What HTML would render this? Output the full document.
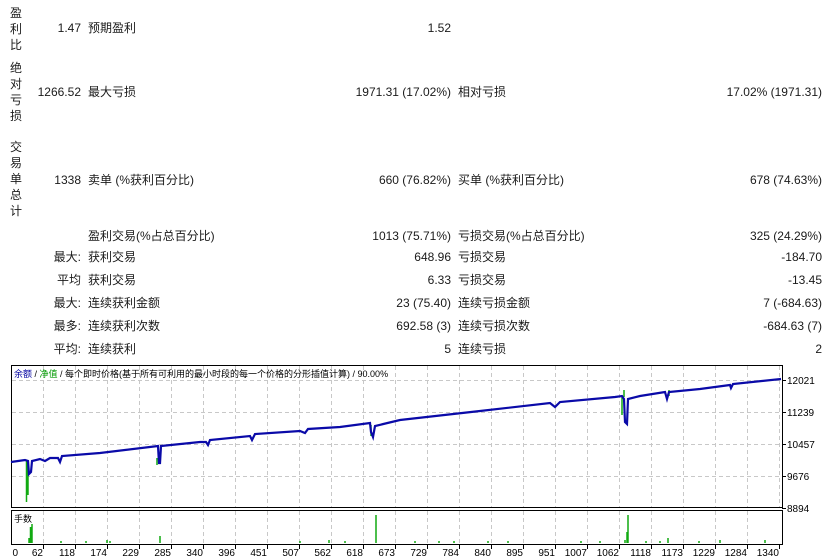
<!DOCTYPE html>
<html><head><meta charset="utf-8"><style>
body{margin:0;width:830px;height:560px;background:#fff;position:relative;overflow:hidden;font-family:"Liberation Sans","Noto Sans CJK SC",sans-serif;font-size:12px;color:#1a1a1a}
.t{position:absolute;white-space:nowrap;line-height:14px}
.r{text-align:right}
.v{position:absolute;left:10px;width:14px;line-height:16px;font-size:12px}
</style></head><body>
<div class="v" style="top:5px">盈<br>利<br>比</div>
<div class="v" style="top:60px">绝<br>对<br>亏<br>损</div>
<div class="v" style="top:139px">交<br>易<br>单<br>总<br>计</div>

<div class="t r" style="right:749px;top:21px">1.47</div>
<div class="t" style="left:88px;top:21px">预期盈利</div>
<div class="t r" style="right:379px;top:21px">1.52</div>

<div class="t r" style="right:749px;top:85px">1266.52</div>
<div class="t" style="left:88px;top:85px">最大亏损</div>
<div class="t r" style="right:379px;top:85px">1971.31 (17.02%)</div>
<div class="t" style="left:458px;top:85px">相对亏损</div>
<div class="t r" style="right:8px;top:85px">17.02% (1971.31)</div>

<div class="t r" style="right:749px;top:173px">1338</div>
<div class="t" style="left:88px;top:173px">卖单 (%获利百分比)</div>
<div class="t r" style="right:379px;top:173px">660 (76.82%)</div>
<div class="t" style="left:458px;top:173px">买单 (%获利百分比)</div>
<div class="t r" style="right:8px;top:173px">678 (74.63%)</div>

<div class="t" style="left:88px;top:229px">盈利交易(%占总百分比)</div>
<div class="t r" style="right:379px;top:229px">1013 (75.71%)</div>
<div class="t" style="left:458px;top:229px">亏损交易(%占总百分比)</div>
<div class="t r" style="right:8px;top:229px">325 (24.29%)</div>

<div class="t r" style="right:749px;top:250px">最大:</div>
<div class="t" style="left:88px;top:250px">获利交易</div>
<div class="t r" style="right:379px;top:250px">648.96</div>
<div class="t" style="left:458px;top:250px">亏损交易</div>
<div class="t r" style="right:8px;top:250px">-184.70</div>

<div class="t r" style="right:749px;top:273px">平均</div>
<div class="t" style="left:88px;top:273px">获利交易</div>
<div class="t r" style="right:379px;top:273px">6.33</div>
<div class="t" style="left:458px;top:273px">亏损交易</div>
<div class="t r" style="right:8px;top:273px">-13.45</div>

<div class="t r" style="right:749px;top:296px">最大:</div>
<div class="t" style="left:88px;top:296px">连续获利金额</div>
<div class="t r" style="right:379px;top:296px">23 (75.40)</div>
<div class="t" style="left:458px;top:296px">连续亏损金额</div>
<div class="t r" style="right:8px;top:296px">7 (-684.63)</div>

<div class="t r" style="right:749px;top:319px">最多:</div>
<div class="t" style="left:88px;top:319px">连续获利次数</div>
<div class="t r" style="right:379px;top:319px">692.58 (3)</div>
<div class="t" style="left:458px;top:319px">连续亏损次数</div>
<div class="t r" style="right:8px;top:319px">-684.63 (7)</div>

<div class="t r" style="right:749px;top:342px">平均:</div>
<div class="t" style="left:88px;top:342px">连续获利</div>
<div class="t r" style="right:379px;top:342px">5</div>
<div class="t" style="left:458px;top:342px">连续亏损</div>
<div class="t r" style="right:8px;top:342px">2</div>

<svg width="830" height="560" style="position:absolute;left:0;top:0" xmlns="http://www.w3.org/2000/svg">
<g stroke="#c8c8c8" stroke-dasharray="4,3" stroke-width="1">
<path d="M43.5 366V507M75.5 366V507M107.5 366V507M139.5 366V507M171.5 366V507M203.5 366V507M235.5 366V507M267.5 366V507M299.5 366V507M331.5 366V507M363.5 366V507M395.5 366V507M427.5 366V507M459.5 366V507M491.5 366V507M523.5 366V507M555.5 366V507M587.5 366V507M619.5 366V507M651.5 366V507M683.5 366V507M715.5 366V507M747.5 366V507M779.5 366V507"/>
<path d="M12 380.5H781M12 412.5H781M12 444.5H781M12 476.5H781"/>
<path d="M43.5 511V543M75.5 511V543M107.5 511V543M139.5 511V543M171.5 511V543M203.5 511V543M235.5 511V543M267.5 511V543M299.5 511V543M331.5 511V543M363.5 511V543M395.5 511V543M427.5 511V543M459.5 511V543M491.5 511V543M523.5 511V543M555.5 511V543M587.5 511V543M619.5 511V543M651.5 511V543M683.5 511V543M715.5 511V543M747.5 511V543"/>
</g>
<rect x="11.5" y="365.5" width="771" height="142" fill="none" stroke="#000"/>
<rect x="11.5" y="510.5" width="771" height="34" fill="none" stroke="#000"/>
<g stroke="#000"><path d="M782 380.5h4M782 412.5h4M782 444.5h4M782 476.5h4M782 508.5h4"/>
<path d="M43.5 545v4M75.5 545v4M107.5 545v4M139.5 545v4M171.5 545v4M203.5 545v4M235.5 545v4M267.5 545v4M299.5 545v4M331.5 545v4M363.5 545v4M395.5 545v4M427.5 545v4M459.5 545v4M491.5 545v4M523.5 545v4M555.5 545v4M587.5 545v4M619.5 545v4M651.5 545v4M683.5 545v4M715.5 545v4M747.5 545v4M779.5 545v4"/></g>
<g stroke="#11aa11" stroke-width="1.5" fill="none">
<path d="M26.5 461V502M28 461V495M157 458V465M371 425V436M622 396V415M669 390V396M624 397V390"/>
<path d="M30.5 543V527M32 543V524M29 543V538M160 543V536M376 543V515M628 543V515M627 543V532M625 543V540M668 543V538M720 543V540M765 543V540M61 543v-2M86 543v-2M107 543v-3M110 543v-2M300 543v-2M329 543v-3M345 543v-2M415 543v-2M439 543v-2M454 543v-2M488 543v-2M508 543v-2M581 543v-2M600 543v-2M646 543v-2M660 543v-2M699 543v-2"/>
</g>
<polyline fill="none" stroke="#0a0aa8" stroke-width="2.2" points="11,462 25,460 28,461 29,474 31,472 32,461 40,459 45,461 50,458 58,458 60,462 62,456 100,453 158,446 159,463 160,463 161,446 200,442 206,442 208,445 210,440 250,436 252,440 255,434 300,431 305,433 308,429 340,427 370,423 371,432 373,437 375,426 400,420 480,411 550,403 555,407 560,402 615,397 622,396 624,399 625,422 627,424 628,399 640,396 665,392 667,399 669,392 700,389 730,385 731,388 733,384 781,379"/>
<text x="14" y="377" font-size="9" font-family="Liberation Sans,Noto Sans CJK SC,sans-serif"><tspan fill="#0000a0">余额</tspan><tspan fill="#000"> / </tspan><tspan fill="#009900">净值</tspan><tspan fill="#000"> / 每个即时价格(基于所有可利用的最小时段的每一个价格的分形插值计算) / 90.00%</tspan></text>
<text x="14" y="522" font-size="9" fill="#000" font-family="Liberation Sans,Noto Sans CJK SC,sans-serif">手数</text>
<g font-size="10" fill="#000" font-family="Liberation Sans,sans-serif">
<text x="787" y="384">12021</text><text x="787" y="416">11239</text><text x="787" y="448">10457</text><text x="787" y="480">9676</text><text x="787" y="512">8894</text>
</g>
<g font-size="10" fill="#000" font-family="Liberation Sans,sans-serif" text-anchor="end">
<text x="18" y="556">0</text><text x="43" y="556">62</text><text x="75" y="556">118</text><text x="107" y="556">174</text><text x="139" y="556">229</text><text x="171" y="556">285</text><text x="203" y="556">340</text><text x="235" y="556">396</text><text x="267" y="556">451</text><text x="299" y="556">507</text><text x="331" y="556">562</text><text x="363" y="556">618</text><text x="395" y="556">673</text><text x="427" y="556">729</text><text x="459" y="556">784</text><text x="491" y="556">840</text><text x="523" y="556">895</text><text x="555" y="556">951</text><text x="587" y="556">1007</text><text x="619" y="556">1062</text><text x="651" y="556">1118</text><text x="683" y="556">1173</text><text x="715" y="556">1229</text><text x="747" y="556">1284</text><text x="779" y="556">1340</text>
</g>
</svg>
</body></html>
